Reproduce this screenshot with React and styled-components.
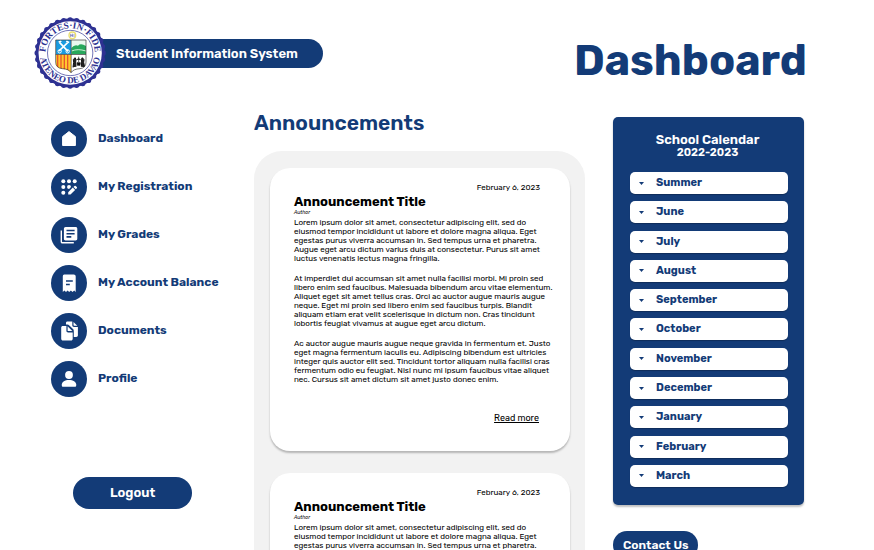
import React from "react";
import styled, { createGlobalStyle } from "styled-components";

const NAVY = "#133b77";

const GlobalStyle = createGlobalStyle`
  *, *::before, *::after { box-sizing: border-box; }
  body {
    margin: 0;
    background: #fff;
    color: #000;
    font-family: Rubik, Inter, Roboto, sans-serif;
  }
  h1, h2, h3, p, ul { margin: 0; padding: 0; }
  button { font: inherit; border: 0; cursor: pointer; }
`;

const Page = styled.div`
  height: 100vh;
  overflow: hidden;
`;

const Header = styled.header`
  display: flex;
  align-items: center;
  justify-content: space-between;
  padding: 17px 67px 0 34px;
`;

const Brand = styled.div`
  display: flex;
  align-items: center;
`;

const Seal = styled.svg`
  width: 72px;
  height: 72px;
  flex: none;
  z-index: 1;
`;

const BrandName = styled.p`
  margin-left: -12px;
  padding: 0 25px 0 22px;
  border-radius: 0 15px 15px 0;
  background: ${NAVY};
  color: #fff;
  font-size: 13px;
  font-weight: 600;
  line-height: 29px;
  white-space: nowrap;
`;

const PageTitle = styled.h1`
  padding-top: 16px;
  color: ${NAVY};
  font-size: 43px;
  font-weight: 700;
  line-height: 56px;
`;

const Columns = styled.div`
  display: grid;
  grid-template-columns: 175px minmax(0, 1fr) 191px;
  column-gap: 28px;
  align-items: start;
  padding: 20px 70px 0 51px;
`;

const Sidebar = styled.nav`
  padding-top: 12px;
`;

const NavList = styled.ul`
  display: grid;
  row-gap: 12px;
  list-style: none;
`;

const NavLink = styled.a`
  display: flex;
  align-items: center;
  gap: 11px;
  color: ${NAVY};
  font-size: 12px;
  font-weight: 700;
  line-height: 16px;
  text-decoration: none;
  white-space: nowrap;
`;

const NavLabel = styled.span`
  padding-bottom: 3px;
`;

const IconDisc = styled.span`
  display: grid;
  place-items: center;
  width: 36px;
  height: 36px;
  flex: none;
  border-radius: 50%;
  background: ${NAVY};
`;

const Icon = styled.svg`
  width: 24px;
  height: 24px;
  fill: #fff;
`;

const PillButton = styled.button`
  display: block;
  margin: ${(p) => p.$margin};
  padding: 0 ${(p) => p.$pad}px;
  border-radius: 16px;
  background: ${NAVY};
  color: #fff;
  font-size: ${(p) => p.$size}px;
  font-weight: 600;
  line-height: ${(p) => p.$line}px;
`;

const SectionTitle = styled.h2`
  color: ${NAVY};
  font-size: 21px;
  font-weight: 600;
  line-height: 28px;
`;

const Feed = styled.div`
  display: grid;
  grid-template-columns: minmax(0, 1fr);
  gap: 22px;
  margin-top: 14px;
  padding: 17px 15px 30px 16px;
  border-radius: 28px;
  background: #f2f2f2;
`;

const Card = styled.article`
  display: flex;
  flex-direction: column;
  padding: 14px 24px 27px;
  border-radius: 20px;
  background: #fff;
  box-shadow: 0 2px 2px rgba(0, 0, 0, 0.25);
`;

const CardDate = styled.time`
  align-self: flex-end;
  margin-right: 6px;
  font-size: 8px;
  line-height: 12px;
`;

const CardTitle = styled.h3`
  font-size: 13px;
  font-weight: 700;
  line-height: 15px;
`;

const CardAuthor = styled.p`
  font-size: 5px;
  font-style: italic;
  line-height: 6px;
`;

const CardBody = styled.div`
  display: grid;
  gap: 11px;
  margin-top: 3px;
  font-size: 8px;
  line-height: 9px;
  white-space: pre;
`;

const ReadMore = styled.a`
  align-self: flex-end;
  margin: 28px 7px 0 0;
  color: #000;
  font-size: 9px;
  line-height: 12px;
`;

const Calendar = styled.section`
  margin-top: 8px;
  padding: 15px 16px 18px 17px;
  border-radius: 5px;
  background: ${NAVY};
  box-shadow: 0 2px 2px rgba(0, 0, 0, 0.25);
`;

const CalendarTitle = styled.h2`
  color: #fff;
  font-size: 13px;
  font-weight: 600;
  line-height: 15px;
  text-align: center;
`;

const CalendarYears = styled.p`
  color: #fff;
  font-size: 11px;
  font-weight: 600;
  line-height: 12px;
  text-align: center;
`;

const CalendarHeading = styled.div`
  padding-right: 3px;
`;

const MonthList = styled.ul`
  display: flex;
  flex-direction: column;
  justify-content: space-between;
  min-height: 315px;
  margin-top: 13px;
  list-style: none;
`;

const MonthButton = styled.button`
  display: flex;
  align-items: center;
  gap: 12px;
  width: 100%;
  padding: 0 9px;
  border-radius: 5px;
  background: #fff;
  box-shadow: 0 1px 1px rgba(0, 0, 0, 0.25);
  color: ${NAVY};
  font-size: 11px;
  font-weight: 700;
  line-height: 22px;
`;

const Caret = styled.svg`
  width: 5px;
  height: 3px;
  fill: ${NAVY};
`;

const icons = {
  home: <path d="M5.600 9.600 12 4.600l6.400 5v8.900H5.600z" stroke="#fff" strokeLinejoin="round" />,
  registration: (
    <>
      <circle cx="6.3" cy="6.3" r="2" />
      <circle cx="12" cy="6.3" r="2" />
      <circle cx="17.7" cy="6.3" r="2" />
      <circle cx="6.3" cy="12" r="2" />
      <path d="M12 10a2 2 0 0 1 2 2.100L12.100 14A2 2 0 1 1 12 10z" />
      <circle cx="6.3" cy="17.7" r="2" />
      <path d="M11.200 17.200v2.300h2.300l4.600-4.600-2.300-2.300zM16.500 11.900l1-1q.6-.5 1.200 0l1.100 1.100q.5.600 0 1.200l-1 1z" />
    </>
  ),
  grades: (
    <path d="M5 7.5H3.6v11.2c0 1 .8 1.8 1.8 1.8h11.4V19H5.5a.5.5 0 0 1-.5-.5zM18.6 4H8.6c-1 0-1.700.8-1.700 1.700v10c0 1 .7 1.700 1.700 1.700h10c1 0 1.700-.8 1.700-1.700v-10c0-1-.8-1.700-1.700-1.700zm-1 7.500H9.500V9.900h8.100zm-3.300 3.200H9.500v-1.600h4.800zm3.300-6.400H9.500V6.700h8.100z" />
  ),
  balance: (
    <path
      fillRule="evenodd"
      d="M7.300 3.600h9.400c1.200 0 2 .8 2 2v15.300l-1.500-1.300-1.700 1.300-1.600-1.300-1.700 1.300-1.600-1.300L9 20.900l-1.600-1.300-1.600 1.300V5.600c0-1.200.5-2 1.500-2zM9 9.300v1.500h6.800V9.300zm0 3.400v1.500h3.800v-1.500z"
    />
  ),
  documents: (
    <>
      <path d="M10.400 2.600h4.900v3.600c0 1 .7 1.700 1.700 1.700h3.900v8.400c0 1-.7 1.700-1.700 1.700h-2.400v-6.100c0-.7-.3-1.300-.8-1.800L12.300 6.400c-.5-.5-1.200-.8-1.900-.8H9V4c0-.8.600-1.400 1.400-1.400z" />
      <path d="M16.500 2.900v3.100c0 .4.300.7.700.7h3.100z" />
      <path d="M5.800 7.100h3.600v4.600c0 1 .7 1.700 1.700 1.700h4.600v6.400c0 1-.7 1.800-1.700 1.800H6c-1 0-1.800-.8-1.800-1.800V8.700c0-1 .7-1.600 1.600-1.600z" />
      <path d="M10.600 7.300v4.100c0 .4.300.7.700.7h4z" />
    </>
  ),
  profile: (
    <>
      <circle cx="12" cy="8" r="3.9" />
      <path d="M12 13c-4.100 0-7.200 1.900-7.200 4.600v.8c0 .8.500 1.300 1.300 1.300h11.800c.8 0 1.300-.5 1.300-1.300v-.8C19.200 14.900 16.100 13 12 13z" />
    </>
  ),
};

const navItems = [
  ["home", "Dashboard"],
  ["registration", "My Registration"],
  ["grades", "My Grades"],
  ["balance", "My Account Balance"],
  ["documents", "Documents"],
  ["profile", "Profile"],
];

const months = [
  "Summer", "June", "July", "August", "September", "October",
  "November", "December", "January", "February", "March",
];

const paragraphs = [
  `Lorem ipsum dolor sit amet, consectetur adipiscing elit, sed do
eiusmod tempor incididunt ut labore et dolore magna aliqua. Eget
egestas purus viverra accumsan in. Sed tempus urna et pharetra.
Augue eget arcu dictum varius duis at consectetur. Purus sit amet
luctus venenatis lectus magna fringilla.`,
  `At imperdiet dui accumsan sit amet nulla facilisi morbi. Mi proin sed
libero enim sed faucibus. Malesuada bibendum arcu vitae elementum.
Aliquet eget sit amet tellus cras. Orci ac auctor augue mauris augue
neque. Eget mi proin sed libero enim sed faucibus turpis. Blandit
aliquam etiam erat velit scelerisque in dictum non. Cras tincidunt
lobortis feugiat vivamus at augue eget arcu dictum.`,
  `Ac auctor augue mauris augue neque gravida in fermentum et. Justo
eget magna fermentum iaculis eu. Adipiscing bibendum est ultricies
integer quis auctor elit sed. Tincidunt tortor aliquam nulla facilisi cras
fermentum odio eu feugiat. Nisl nunc mi ipsum faucibus vitae aliquet
nec. Cursus sit amet dictum sit amet justo donec enim.`,
];

const scallops = Array.from({ length: 32 }, (_, i) => {
  const a = (i * Math.PI) / 16;
  return [118.5 + 99 * Math.cos(a), 129 + 99 * Math.sin(a)];
});

function UniversitySeal() {
  const lettering = { fill: "#2e3192", fontFamily: "Liberation Serif, serif", fontWeight: 700 };
  return (
    <Seal viewBox="10 21 216 216" role="img" aria-label="Ateneo de Davao">
      <defs>
        <path id="seal-top" d="M50 157A74 74 0 1 1 187 157" />
        <path id="seal-bottom" d="M27.500 129A91 91 0 0 0 209.500 129" />
        <clipPath id="seal-shield">
          <path d="M75 90h91v66q0 18-18 20-20 1-27 12-6-11-26-12-20-2-20-20z" />
        </clipPath>
      </defs>
      <circle cx="118.5" cy="129" r="104" fill="#2e3192" />
      {scallops.map(([x, y]) => (
        <circle key={`${x} ${y}`} cx={x} cy={y} r="8" fill="#2e3192" />
      ))}
      <circle cx="118.5" cy="129" r="95" fill="#fff" />
      <circle cx="118.5" cy="129" r="68" fill="#fff" stroke="#2e3192" strokeWidth="2" />
      <text {...lettering} fontSize="28">
        <textPath href="#seal-top" startOffset="50%" textAnchor="middle">FORTES·IN·FIDE</textPath>
      </text>
      <text {...lettering} fontSize="27">
        <textPath href="#seal-bottom" startOffset="50%" textAnchor="middle">ATENEO DE DAVAO</textPath>
      </text>
      <circle cx="125" cy="76" r="10" fill="#fff" stroke="#eadf70" strokeWidth="4" />
      <path d="M120 72v9M125 71v10M130 72v9M120 76h6" stroke="#2e3192" strokeWidth="1.500" />
      <g clipPath="url(#seal-shield)">
        <path d="M75 90h46v43H75z" fill="#1b9be0" />
        <path d="M122 90h44v43h-44z" fill="#e9f8ee" />
        <path d="M122 114q10-12 20-7 8-9 24 1v25h-44z" fill="#27a85b" />
        <path d="M123 123q18-8 43 0" stroke="#c8f0d4" strokeWidth="3" fill="none" />
        <path d="M75 134h46v56H75z" fill="#ffc82e" />
        <path d="M81 134v56M91 134v56M101 134v56M111 134v56" stroke="#e8562d" strokeWidth="4" />
        <path d="M122 134h44v56h-44z" fill="#fff" />
        <path d="M85 123 111 98M112 124 87 98" stroke="#fff" strokeWidth="5" />
        <circle cx="87" cy="124" r="5" fill="none" stroke="#fff" strokeWidth="3" />
        <circle cx="111" cy="124" r="5" fill="none" stroke="#fff" strokeWidth="3" />
        <path d="M84 97l8-4M107 93l8 5" stroke="#fff" strokeWidth="5" />
        <path
          d="M127 172l2-15-1-8 5-6 3 5-1 8 1 14M162 172l-3-15 1-8-5-6-3 5 1 8-1 14"
          fill="#222" stroke="#111" strokeWidth="3"
        />
        <path d="M139 158h10l-1 8h-8zM144 140v16M138 149q6-6 12 0" fill="#111" stroke="#111" strokeWidth="2" />
      </g>
      <path d="M75 90h91v66q0 18-18 20-20 1-27 12-6-11-26-12-20-2-20-20zM121.500 90v98M75 133.500h91" fill="none" stroke="#333" strokeWidth="2" />
    </Seal>
  );
}

function Announcement() {
  return (
    <Card>
      <CardDate dateTime="2023-02-06">February 6, 2023</CardDate>
      <CardTitle>Announcement Title</CardTitle>
      <CardAuthor>Author</CardAuthor>
      <CardBody>
        {paragraphs.map((text) => (
          <p key={text}>{text}</p>
        ))}
      </CardBody>
      <ReadMore href="#announcement">Read more</ReadMore>
    </Card>
  );
}

export default function App() {
  return (
    <Page>
      <GlobalStyle />
      <Header>
        <Brand>
          <UniversitySeal />
          <BrandName>Student Information System</BrandName>
        </Brand>
        <PageTitle>Dashboard</PageTitle>
      </Header>
      <Columns>
        <Sidebar aria-label="Main">
          <NavList>
            {navItems.map(([icon, label]) => (
              <li key={label}>
                <NavLink href={`#${icon}`}>
                  <IconDisc>
                    <Icon viewBox="0 0 24 24" aria-hidden="true">{icons[icon]}</Icon>
                  </IconDisc>
                  <NavLabel>{label}</NavLabel>
                </NavLink>
              </li>
            ))}
          </NavList>
          <PillButton type="button" $margin="80px 0 0 22px" $pad={37} $size={13} $line={32}>
            Logout
          </PillButton>
        </Sidebar>
        <main>
          <SectionTitle>Announcements</SectionTitle>
          <Feed>
            <Announcement />
            <Announcement />
          </Feed>
        </main>
        <aside>
          <Calendar>
            <CalendarHeading>
              <CalendarTitle>School Calendar</CalendarTitle>
              <CalendarYears>2022-2023</CalendarYears>
            </CalendarHeading>
            <MonthList>
              {months.map((month) => (
                <li key={month}>
                  <MonthButton type="button" aria-expanded="false">
                    <Caret viewBox="0 0 5 3" aria-hidden="true">
                      <path d="M0 0h5L2.500 3z" />
                    </Caret>
                    {month}
                  </MonthButton>
                </li>
              ))}
            </MonthList>
          </Calendar>
          <PillButton type="button" $margin="26px 0 0" $pad={10} $size={12} $line={28}>
            Contact Us
          </PillButton>
        </aside>
      </Columns>
    </Page>
  );
}
